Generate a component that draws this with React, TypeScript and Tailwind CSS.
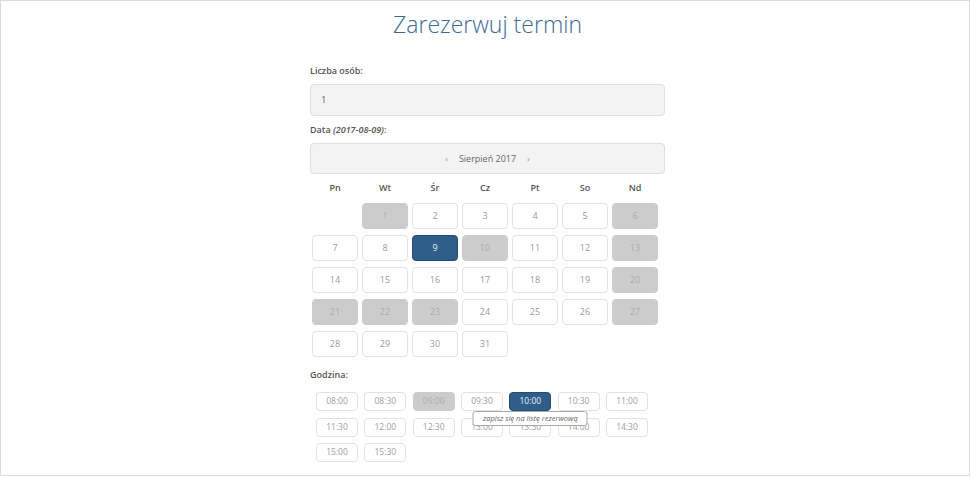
import React from 'react';

type DayState = 'normal' | 'disabled' | 'selected';

const disabledDays = [1, 6, 10, 13, 20, 21, 22, 23, 27];
const selectedDay = 9;

const times = [
  '08:00', '08:30', '09:00', '09:30', '10:00', '10:30', '11:00',
  '11:30', '12:00', '12:30', '13:00', '13:30', '14:00', '14:30',
  '15:00', '15:30',
];

const dayHeaders = ['Pn', 'Wt', 'Śr', 'Cz', 'Pt', 'So', 'Nd'];

function dayState(d: number): DayState {
  if (d === selectedDay) return 'selected';
  if (disabledDays.includes(d)) return 'disabled';
  return 'normal';
}

const DayCell: React.FC<{ day?: number }> = ({ day }) => {
  if (!day) return <div className="h-[26px]" />;
  const state = dayState(day);
  const cls =
    state === 'selected'
      ? 'bg-[#2e5e89] border-[#244d72] text-[#e4ecf4]'
      : state === 'disabled'
      ? 'bg-[#cccccc] border-[#cccccc] text-[#adadad]'
      : 'bg-white border-[#e2e2e2] text-[#9a9a9a]';
  return (
    <div className={`mx-[2px] h-[26px] rounded-[4px] border flex items-center justify-center text-[9px] ${cls}`}>
      {day}
    </div>
  );
};

const TimeButton: React.FC<{ time: string }> = ({ time }) => {
  const selected = time === '10:00';
  const disabled = time === '09:00';
  const cls = selected
    ? 'bg-[#2e5e89] border-[#244d72] text-[#e8eef5]'
    : disabled
    ? 'bg-[#cccccc] border-[#cccccc] text-[#adadad]'
    : 'bg-white border-[#e2e2e2] text-[#a0a0a0]';
  return (
    <div className={`relative w-[42px] h-[19px] rounded-[4px] border flex items-center justify-center text-[8.5px] ${cls}`}>
      {time}
      {selected && (
        <div className="absolute top-[calc(100%+1px)] left-1/2 -translate-x-1/2 w-[115px] h-[15px] bg-white border border-[#a8a8a8] rounded-[3px] flex items-center justify-center z-10">
          <span className="italic text-[7.5px] text-[#666] whitespace-nowrap">zapisz się na listę rezerwową</span>
        </div>
      )}
    </div>
  );
};

export default function App() {
  // August 2017 starts on Tuesday
  const cells: (number | undefined)[] = [undefined];
  for (let d = 1; d <= 31; d++) cells.push(d);

  return (
    <div className="w-[970px] h-[476px] border border-[#dcdcdc] bg-white font-['Open_Sans',sans-serif] overflow-hidden">
      <div className="w-[360px] mx-auto pl-[5px]">
        <h1 className="text-center text-[23px] font-light text-[#3c6b93] leading-[36px] pt-[5px]">
          Zarezerwuj termin
        </h1>

        <div className="mt-[21px] text-[9px] font-semibold text-[#555] leading-[16px]">Liczba osób:</div>
        <div className="mt-[5px] h-[32px] rounded-[4px] border border-[#e0e0e0] bg-[#f3f3f3] flex items-center pl-[10px] text-[9.5px] text-[#666]">
          1
        </div>

        <div className="mt-[6px] text-[9px] font-semibold text-[#555] leading-[16px]">
          Data <span className="italic">(2017-08-09)</span>:
        </div>
        <div className="mt-[5px] h-[31px] rounded-[4px] border border-[#e0e0e0] bg-[#f3f3f3] flex items-center justify-center gap-[11px] text-[9px] text-[#666]">
          <span className="text-[#999]">‹</span>
          <span>Sierpień 2017</span>
          <span className="text-[#999]">›</span>
        </div>

        <div className="grid grid-cols-7 w-[350px] mt-[4px] h-[20px] items-center">
          {dayHeaders.map((h) => (
            <div key={h} className="text-center text-[9px] font-semibold text-[#555]">{h}</div>
          ))}
        </div>

        <div className="grid grid-cols-7 w-[350px] gap-y-[6px] mt-[5px]">
          {cells.map((d, i) => (
            <DayCell key={i} day={d} />
          ))}
        </div>

        <div className="mt-[10px] text-[9px] font-semibold text-[#555] leading-[16px]">Godzina:</div>
        <div className="mt-[9px] ml-[6px] flex flex-wrap w-[340px] gap-x-[6.33px] gap-y-[6.5px]">
          {times.map((t) => (
            <TimeButton key={t} time={t} />
          ))}
        </div>
      </div>
    </div>
  );
}
